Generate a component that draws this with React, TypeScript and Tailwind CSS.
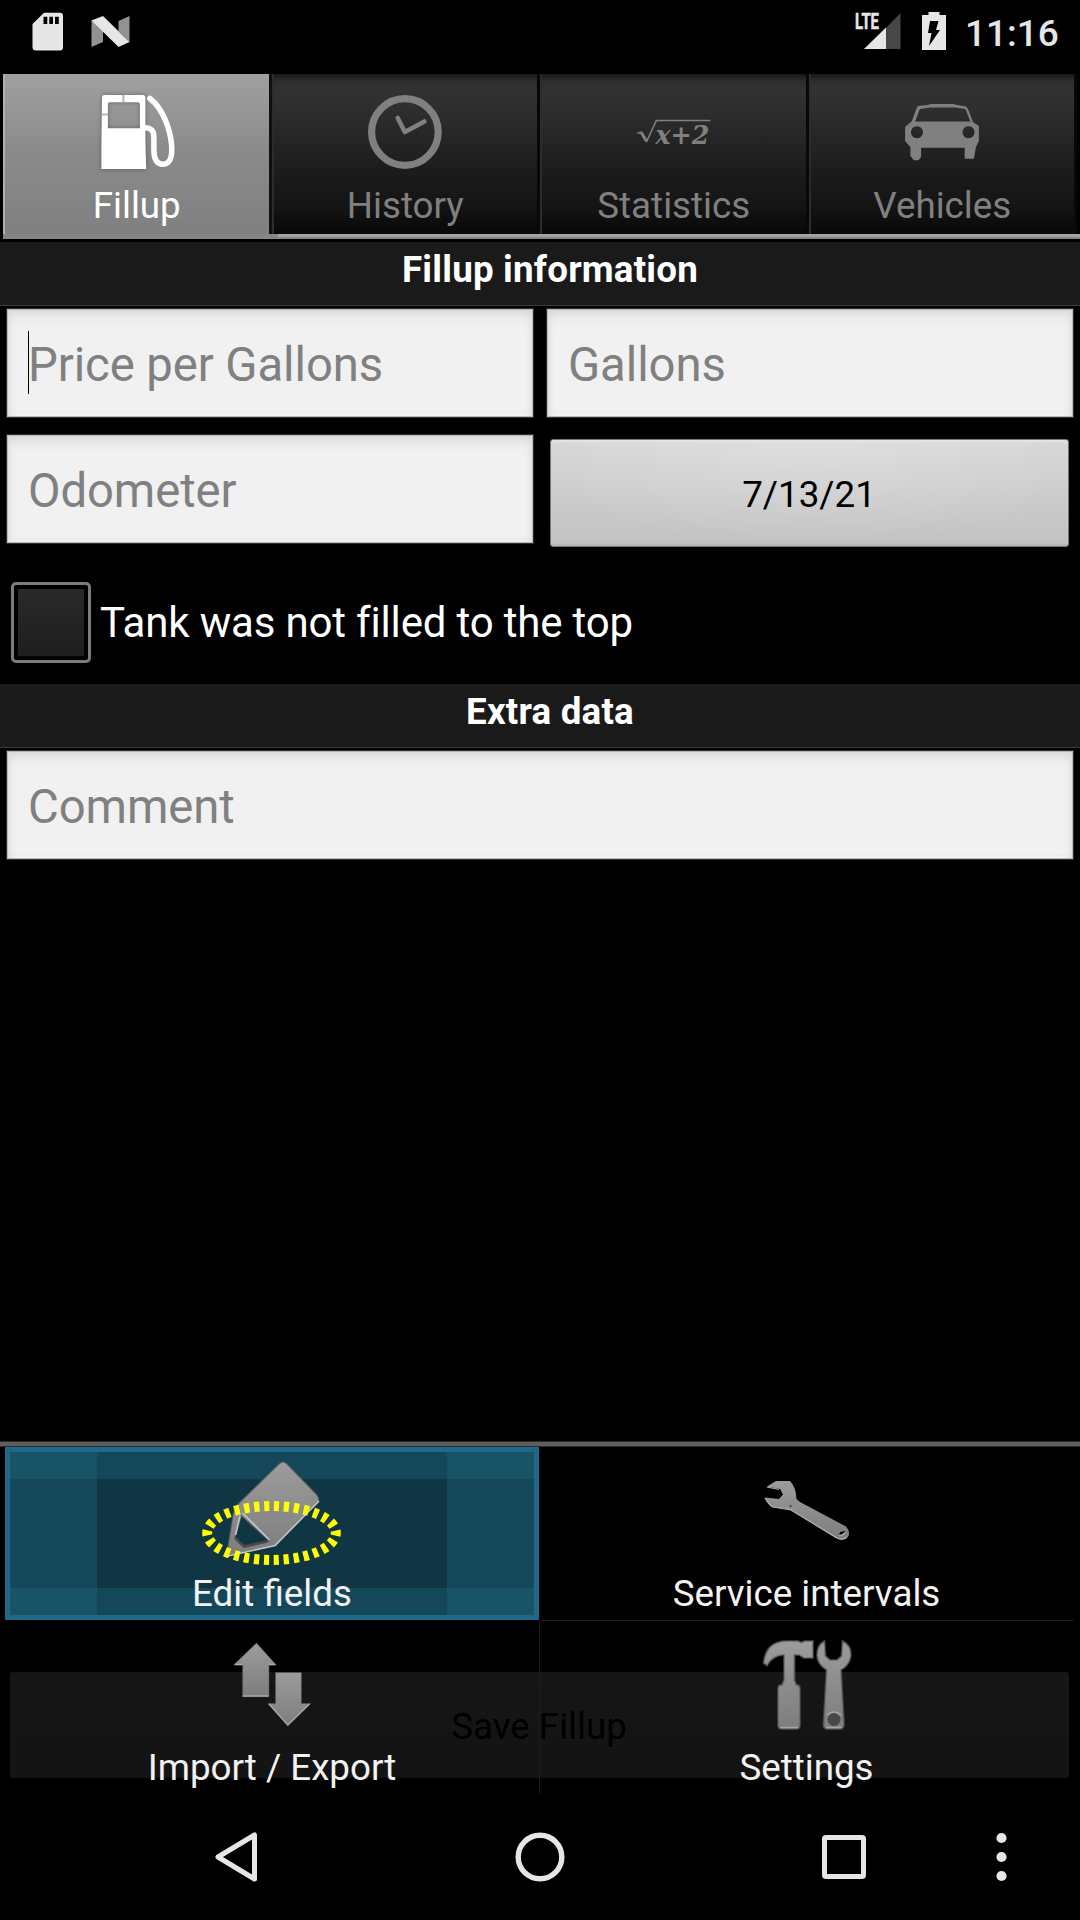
import React from "react";

const LABEL = "text-[36.75px] leading-[43px] whitespace-nowrap";

function StatusBar() {
  return (
    <header className="flex h-[74px] shrink-0 items-start pl-[32px] pr-[21px] text-[#e6e6e6]">
      <svg className="mt-[12px] h-[39px] w-[31px]" viewBox="0 0 31 39">
        <path fill="#e6e6e6" fillRule="evenodd" d="M12 .7H28Q31 .7 31 4V35Q31 38.500 28 38.500H4Q.5 38.500 .5 35V12ZM11.500 4.700V12H15.300V4.700ZM17.300 4.700V12H21V4.700ZM23 4.700V12H26.800V4.700Z" />
      </svg>
      <svg className="ml-[28px] mt-[15px] h-[34px] w-[40px]" viewBox="0 0 40 34">
        <path fill="#929292" d="M.5 5L12 15V27L.5 32ZM27.500 6L38.500 1V27L27.500 16Z" />
        <path fill="#e6e6e6" d="M.5 5.500L12 1L38.500 27L27.500 32Z" />
      </svg>
      <svg className="ml-auto mt-[8px] h-[42px] w-[50px] overflow-visible" viewBox="-4 -4 50 42">
        <path fill="#474747" d="M45.500 1V37H31V16Z" />
        <path fill="#e6e6e6" d="M31 15.500V37H9Z" />
        <text x="0" y="17" textLength="24" lengthAdjust="spacingAndGlyphs" fill="#e6e6e6" stroke="#e6e6e6" strokeWidth=".5" className="text-[21.5px] font-bold">LTE</text>
      </svg>
      <svg className="ml-[21px] mt-[12px] h-[38px] w-[24px]" viewBox="0 0 24 38">
        <path fill="#e6e6e6" d="M6.500 0H17.500V3H24V38H0V3H6.500Z" />
        <path fill="#000" d="M8 9H16.500L14 18H18L7 34L9.500 21H6Z" />
      </svg>
      <div className="ml-[19px] mt-[12px] w-[94px] text-[37px] font-medium leading-[43px]">11:16</div>
    </header>
  );
}

const TAB_ICON = "h-[110px] w-[268.5px] shrink-0";

function PumpIcon() {
  return (
    <svg className={TAB_ICON} viewBox="2.600 74 268.500 110">
      <path fill="#fff" fillRule="evenodd" style={{ filter: "drop-shadow(0 0 2px rgba(0,0,0,.35))" }} d="M104 95H142Q145 95 145 98V140L145.800 169H101V145L101.600 98Q101.600 95 104 95ZM107.500 104V128.300H139.500V105Q139.500 102.300 137 102.300H109.500Q107.500 102.300 107.500 104Z" />
      <path fill="none" stroke="#fff" strokeWidth="5.500" strokeLinecap="round" d="M149.500 98.500C163 109 170 130 171.200 145C172 157 170 164 162.500 164.300C155 164 153.500 157 153.500 150V137C153.500 130 150 127.800 144 127.800" />
      <path stroke="#b5b5b5" strokeWidth="2" d="M123 95V102M101.500 114.500H107.500" />
    </svg>
  );
}

function ClockIcon() {
  return (
    <svg className={TAB_ICON} viewBox="271.100 74 268.500 110">
      <circle cx="405" cy="132" r="33.300" fill="none" stroke="#808080" strokeWidth="7.200" />
      <path d="M397.800 118L405 132L424.500 121.500" fill="none" stroke="#808080" strokeWidth="4.600" strokeLinecap="round" strokeLinejoin="round" />
    </svg>
  );
}

function FormulaIcon() {
  return (
    <svg className={TAB_ICON} viewBox="539.600 74 268.500 110">
      <path d="M637 133.500L640.500 132" fill="none" stroke="#808080" strokeWidth="1.500" />
      <path d="M640.500 132L646 141" fill="none" stroke="#808080" strokeWidth="3" />
      <path d="M646 142L656 120.500H710" fill="none" stroke="#808080" strokeWidth="1.600" />
      <text x="655" y="144.300" textLength="54" lengthAdjust="spacingAndGlyphs" fill="#808080" className="font-['DejaVu_Serif'] text-[26px] font-bold italic">x+2</text>
    </svg>
  );
}

function CarIcon() {
  return (
    <svg className={TAB_ICON} viewBox="808.100 74 268.500 110">
      <path
        fill="#808080"
        fillRule="evenodd"
        d="M918 106L928 105L931 104H953L957 105L966 106.500Q968 108 969 111L973 122L979 126V141L976 147L974 158.700H964.800V147.700H921.200V157L918.500 160.300H914L910.500 156V147L905.200 141V127L912 121L916 110ZM920 109L915.300 121.500H970.500L965.500 109L955 107.500H930ZM917 126.300A6 6 0 1 0 917.100 126.300ZM968.600 126.300A6 6 0 1 0 968.700 126.300Z"
      />
    </svg>
  );
}

const tabs = [
  { label: "Fillup", icon: <PumpIcon /> },
  { label: "History", icon: <ClockIcon /> },
  { label: "Statistics", icon: <FormulaIcon /> },
  { label: "Vehicles", icon: <CarIcon /> },
];

function Tabs() {
  return (
    <nav className="h-[168px] shrink-0">
      <div className="grid h-[160px] grid-cols-4 px-[3px]">
        {tabs.map((tab, i) => (
          <div
            key={tab.label}
            className={
              i === 0
                ? "flex flex-col items-center border-l-2 border-r-3 border-l-[#b0b0b0] border-r-[#101010] bg-linear-to-b from-[#a0a0a0] via-[#8a8a8a] to-[#808080] text-white"
                : "flex flex-col items-center border-l-2 border-r-3 border-l-[#2c2c2c] border-r-[#080808] bg-[linear-gradient(to_bottom,#171717_0,#2b2b2b_6px,#323232_14px,#2f2f2f_32px,#1b1b1b_100px,#151515_130px,#080808_160px)] text-[#808080]"
            }
          >
            {tab.icon}
            <span className={LABEL}>{tab.label}</span>
          </div>
        ))}
      </div>
      <div className="flex h-[5px] pl-[3px]">
        <div className="w-[275px] bg-[#858585]" />
        <div className="flex-1 border-b-2 border-[#858585] bg-[#a3a3a3]" />
      </div>
    </nav>
  );
}

function SectionTitle({ children }: { children: React.ReactNode }) {
  return (
    <h2 className="h-[64px] shrink-0 border-b border-[#3c3c3c] bg-[#1a1a1a] pl-[20px] pt-[6px] text-center text-[36.75px] font-bold leading-[43px] tracking-[0.2px] text-white">
      {children}
    </h2>
  );
}

function Field({ hint, focused }: { hint: string; focused?: boolean }) {
  return (
    <div className="flex h-[110px] flex-1 items-start border border-[#303030] bg-[#f1f1f1] pl-[21px] pt-[22px] text-[47.25px] tracking-[-0.08px] text-[#808080] shadow-[inset_0_0_0_1px_#b8b8b8,inset_0_8px_14px_-4px_#d4d4d4,inset_2px_0_8px_-2px_#dcdcdc,inset_-2px_0_8px_-2px_#dcdcdc,inset_0_-3px_0_#fbfbfb]">
      <span className={focused ? "-mr-px h-[63px] w-px bg-black" : "-mr-px h-[63px] w-px"} />
      <span className="mt-[3px] leading-[63px]">{hint}</span>
    </div>
  );
}

function Form() {
  return (
    <main className="flex h-[1552px] shrink-0 flex-col">
      <SectionTitle>Fillup information</SectionTitle>
      <div className="flex gap-[12px] px-[6px] pt-[2px]">
        <Field hint="Price per Gallons" focused />
        <Field hint="Gallons" />
      </div>
      <div className="flex pl-[6px] pr-[11px] pt-[16px]">
        <div className="flex w-[528px]">
          <Field hint="Odometer" />
        </div>
        <div className="ml-[16px] mt-[5px] flex h-[108px] flex-1 justify-center rounded-[3px] border border-[#777] bg-[radial-gradient(ellipse_at_top,rgba(255,255,255,.2),transparent_75%),linear-gradient(to_bottom,#d8d8d8,#c2c2c2)] pr-px pt-[33px] text-[36.75px] leading-[43px] text-black shadow-[inset_0_2px_1px_#e4e4e4,inset_0_-2px_1px_#b8b8b8]">
          <span>7/13/21</span>
        </div>
      </div>
      <div className="flex items-start pl-[11px] pt-[35px]">
        <div className="flex h-[81px] w-[80px] rounded-[5px] border-[3px] border-[#7c7c7c] bg-black p-[4px]">
          <div className="flex-1 bg-linear-to-b from-[#2a2a2a] to-[#1e1e1e]" />
        </div>
        <span className="ml-[9px] mt-[16px] text-[42px] leading-[49px] tracking-[-0.17px] text-white [font-variant-ligatures:common-ligatures]">Tank was not filled to the top</span>
      </div>
      <div className="mt-[21px]">
        <SectionTitle>Extra data</SectionTitle>
      </div>
      <div className="flex px-[6px] pt-[2px]">
        <Field hint="Comment" />
      </div>
      <div className="mr-[11px] ml-[10px] mt-auto mb-[16px] flex h-[106px] justify-center rounded-[3px] bg-linear-to-b from-[#dcdcdc] to-[#c4c4c4] pr-px pt-[33px] text-[36.75px] leading-[43px] text-black">
        <span>Save Fillup</span>
      </div>
    </main>
  );
}

function IconGradient({ id }: { id: string }) {
  return (
    <defs>
      <linearGradient id={id} x1="0" y1="0" x2="0" y2="1">
        <stop offset="0" stopColor="#9c9c9c" />
        <stop offset="1" stopColor="#7d7d7d" />
      </linearGradient>
    </defs>
  );
}

function EditIcon() {
  return (
    <svg className="h-[125px] w-[160px]" viewBox="192 1447 160 125">
      <IconGradient id="edit" />
      <path fill="url(#edit)" stroke="#4a5358" strokeOpacity=".6" strokeWidth="1.500" fillRule="evenodd" d="M279 1464Q283 1460 287 1464L317 1495Q320 1499 318 1502L276 1545L228 1556Q227 1556 227 1552L233 1515Q234 1508 239 1503ZM241.500 1516L235 1537L244 1547.500L269 1541Z" />
      <path fill="none" stroke="#4f4a48" strokeWidth="2.500" d="M235 1538L244 1546.500L267 1541.500" />
      <path fill="none" stroke="#c4c8ca" strokeWidth="1.600" d="M242.500 1513L269.500 1540M240 1516L235.500 1535M319 1501L275 1545.500L228 1556" />
      <ellipse cx="271.500" cy="1533" rx="64.300" ry="27" fill="none" stroke="#ff0" strokeWidth="10" pathLength="300" strokeDasharray="5.200 4.800" strokeDashoffset="2.500" />
    </svg>
  );
}

function WrenchIcon() {
  return (
    <svg className="h-[125px] w-[160px]" viewBox="727 1447 160 125">
      <IconGradient id="wrench" />
      <path
        fill="url(#wrench)"
        fillRule="evenodd"
        d="M767 1486.500L776 1481H790Q796 1487 796.500 1499L800 1502L846 1526.500Q851 1532 848 1537Q843 1542 836 1538L792 1510.500Q785 1508 773 1507.500Q768 1504 765 1497.500L779 1499L783 1494.500L780 1489ZM840 1532L839 1535L843 1534.500L845 1531Z"
      />
      <path fill="none" stroke="#b4b4b4" strokeWidth="1.200" d="M767 1487L779 1489.500M765 1498Q769 1505 773 1507L791 1510L836 1537.500Q842 1541 847 1537M839 1535Q842 1536 845 1533" />
      <circle cx="790.500" cy="1506" r="1" fill="#333" />
    </svg>
  );
}

function ArrowsIcon() {
  return (
    <svg className="h-[125px] w-[160px]" viewBox="192 1621 160 125">
      <IconGradient id="arrows" />
      <g fill="url(#arrows)" stroke="#555" strokeOpacity=".6" strokeWidth="1">
        <path d="M256.500 1643L276.300 1665H269V1696.700H242.600V1665H233.600Z" />
        <path d="M275.500 1672.500H301.400V1703.500H310.500L287.800 1725.500L268 1703.500H275.500Z" />
      </g>
      <path fill="none" stroke="#a8a8a8" strokeWidth="1.300" d="M235 1664.500H242.600M269 1664.500H275M242.600 1696H268.500M269 1704L287.800 1725L309.500 1704" />
    </svg>
  );
}

function ToolsIcon() {
  return (
    <svg className="h-[125px] w-[160px]" viewBox="727 1621 160 125">
      <IconGradient id="tools" />
      <g fill="url(#tools)" stroke="#5c5c5c" strokeOpacity=".6" strokeWidth="2">
        <path d="M763.500 1663Q766 1640 789 1641H798L801 1642.500L805 1641H813V1658H804L799 1655H794.500V1680L796.500 1685H798Q800 1686 800 1689V1725Q800 1729 796 1729H782Q778 1729 778 1725V1689Q778 1686 780 1685H782L784 1680V1655Q773 1655 767 1665.500Z" />
        <path fillRule="evenodd" d="M824.500 1641L825.500 1656L830 1660H837L841.500 1656L842.500 1641Q851 1645 851 1655Q850 1665 841 1670L844 1724Q844 1729 839 1729H828Q823 1729 823.500 1724L826.500 1670Q817 1664 817 1655Q817 1645 824.500 1641Z" />
      </g>
      <circle cx="834" cy="1719.500" r="6.500" fill="#484848" />
      <path fill="none" stroke="#a5a5a5" strokeWidth="1.500" d="M780 1727.500H798M826 1727.500H842M827 1715Q834 1709 841 1715" />
    </svg>
  );
}

function OptionsMenu() {
  const cell = "flex flex-col items-center text-[#f2f2f2]";
  return (
    <div className="absolute inset-x-0 top-[1441px] h-[353px] bg-black/90">
      <div className="h-[6px] border-y border-[#2c2c2c] bg-[#5e5e5e]" />
      <div className="grid grid-cols-[535px_534px] grid-rows-[174px_173px] pl-[5px]">
        <div className={`${cell} relative mb-px mr-px bg-[#113643]`}>
          <div className="absolute inset-0 grid grid-cols-[87px_1fr_87px] grid-rows-[27px_1fr_27px] border-[5px] border-[#1f6a8a] bg-[#15475a]">
            <div className="bg-[#195368]" />
            <div />
            <div className="bg-[#195368]" />
            <div />
            <div className="bg-[#113643]" />
            <div />
            <div className="bg-[#195368]" />
            <div />
            <div className="bg-[#195368]" />
          </div>
          <div className="relative flex flex-col items-center">
            <EditIcon />
            <span className={LABEL}>Edit fields</span>
          </div>
        </div>
        <div className={`${cell} border-b border-[#1b1b1b] pr-px`}>
          <WrenchIcon />
          <span className={LABEL}>Service intervals</span>
        </div>
        <div className={`${cell} border-r border-[#1b1b1b]`}>
          <ArrowsIcon />
          <span className={LABEL}>Import / Export</span>
        </div>
        <div className={`${cell} pr-px`}>
          <ToolsIcon />
          <span className={LABEL}>Settings</span>
        </div>
      </div>
    </div>
  );
}

function NavBar() {
  return (
    <footer className="flex h-[126px] shrink-0 items-center pl-[213px]">
      <svg className="h-[56px] w-[48px]" viewBox="0 0 48 56">
        <path d="M41.500 6V50L5 28Z" fill="none" stroke="#e6e6e6" strokeWidth="5" strokeLinejoin="round" />
      </svg>
      <svg className="ml-[253px] h-[52px] w-[52px]" viewBox="0 0 52 52">
        <circle cx="26" cy="26" r="21.800" fill="none" stroke="#e6e6e6" strokeWidth="5.400" />
      </svg>
      <svg className="ml-[255px] h-[46px] w-[46px]" viewBox="0 0 46 46">
        <rect x="3.500" y="3.500" width="39" height="39" rx="1.500" fill="none" stroke="#e6e6e6" strokeWidth="5" />
      </svg>
      <svg className="ml-[128px] h-[52px] w-[14px]" viewBox="0 0 14 52" fill="#e6e6e6">
        <circle cx="6.500" cy="7" r="5.100" />
        <circle cx="6.500" cy="26" r="5.100" />
        <circle cx="6.500" cy="45" r="5.100" />
      </svg>
    </footer>
  );
}

export default function App() {
  return (
    <div className="relative flex h-[1920px] w-[1080px] flex-col overflow-hidden bg-black font-[Roboto,sans-serif]">
      <StatusBar />
      <Tabs />
      <Form />
      <OptionsMenu />
      <NavBar />
    </div>
  );
}
